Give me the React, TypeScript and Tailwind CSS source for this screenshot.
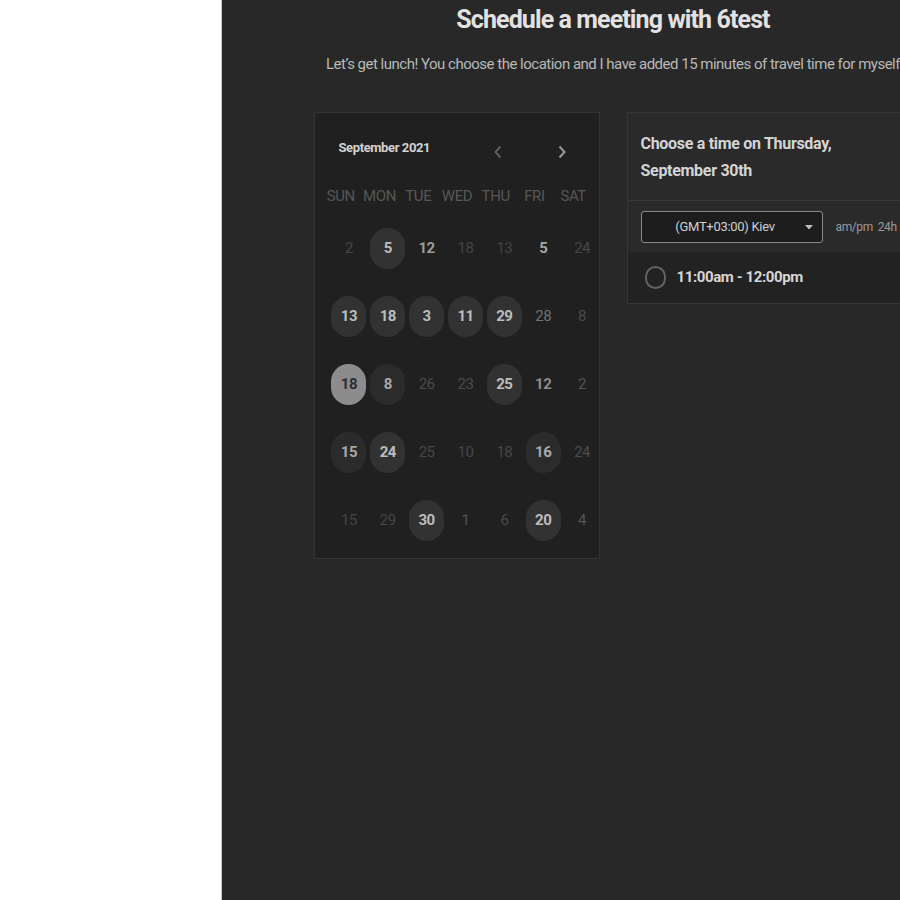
import React from "react";

type Cell = {
  n: number;
  circle?: "mid" | "dark" | "sel";
  tone?: string;
  bold?: boolean;
};

const weekdays = ["SUN", "MON", "TUE", "WED", "THU", "FRI", "SAT"];

// grid of days exactly as shown (not a real month layout)
const weeks: Cell[][] = [
  [
    { n: 2, tone: "text-[#474747]" },
    { n: 5, circle: "mid" },
    { n: 12, tone: "text-[#9a9a9a]", bold: true },
    { n: 18, tone: "text-[#444444]" },
    { n: 13, tone: "text-[#444444]" },
    { n: 5, tone: "text-[#a6a6a6]", bold: true },
    { n: 24, tone: "text-[#474747]" },
  ],
  [
    { n: 13, circle: "mid" },
    { n: 18, circle: "mid" },
    { n: 3, circle: "mid" },
    { n: 11, circle: "mid" },
    { n: 29, circle: "mid" },
    { n: 28, tone: "text-[#707070]" },
    { n: 8, tone: "text-[#4a4a4a]" },
  ],
  [
    { n: 18, circle: "sel" },
    { n: 8, circle: "dark" },
    { n: 26, tone: "text-[#4a4a4a]" },
    { n: 23, tone: "text-[#4a4a4a]" },
    { n: 25, circle: "mid" },
    { n: 12, tone: "text-[#8c8c8c]", bold: true },
    { n: 2, tone: "text-[#555555]" },
  ],
  [
    { n: 15, circle: "dark" },
    { n: 24, circle: "mid" },
    { n: 25, tone: "text-[#474747]" },
    { n: 10, tone: "text-[#474747]" },
    { n: 18, tone: "text-[#474747]" },
    { n: 16, circle: "dark" },
    { n: 24, tone: "text-[#4c4c4c]" },
  ],
  [
    { n: 15, tone: "text-[#454545]" },
    { n: 29, tone: "text-[#454545]" },
    { n: 30, circle: "mid" },
    { n: 1, tone: "text-[#555555]" },
    { n: 6, tone: "text-[#4a4a4a]" },
    { n: 20, circle: "mid" },
    { n: 4, tone: "text-[#555555]" },
  ],
];

function DayCell({ cell }: { cell: Cell }) {
  if (cell.circle) {
    const look =
      cell.circle === "sel"
        ? "bg-[#8c8c8c] text-[#2e2e2e]"
        : cell.circle === "dark"
        ? "bg-[#2b2b2b] text-[#a8a8a8]"
        : "bg-[#323232] text-[#bdbdbd]";
    return (
      <div className="flex h-[68px] items-center justify-center">
        <div
          className={`flex h-[41px] w-[35px] items-center justify-center rounded-full text-[15px] font-bold tracking-[-0.5px] ${look}`}
        >
          {cell.n}
        </div>
      </div>
    );
  }
  return (
    <div
      className={`flex h-[68px] items-center justify-center text-[15px] tracking-[-0.5px] ${
        cell.bold ? "font-bold" : "font-normal"
      } ${cell.tone}`}
    >
      {cell.n}
    </div>
  );
}

function Chevron({ dir, color }: { dir: "left" | "right"; color: string }) {
  return (
    <svg width="10" height="14" viewBox="0 0 10 14" fill="none">
      <path
        d={dir === "left" ? "M7.5 1.5 L2.5 7 L7.5 12.5" : "M2.5 1.5 L7.5 7 L2.5 12.5"}
        stroke={color}
        strokeWidth="2"
      />
    </svg>
  );
}

function CalendarCard() {
  return (
    <div className="w-[286px] border border-[#343434] bg-[#202020] pb-[4px] pt-[23px]">
      {/* Month header */}
      <div className="flex h-[24px] items-center pl-[24px]">
        <span className="w-[150px] text-[13px] font-bold tracking-[-0.4px] text-[#d2d2d2]">
          September 2021
        </span>
        <span className="mt-[8px] flex w-[18px] justify-center">
          <Chevron dir="left" color="#5e5e5e" />
        </span>
        <span className="ml-[46px] mt-[8px] flex w-[18px] justify-center">
          <Chevron dir="right" color="#9a9a9a" />
        </span>
      </div>

      {/* Weekdays */}
      <div className="ml-[7px] mt-[26px] grid w-[271px] grid-cols-7 text-center text-[15px] leading-[20px] tracking-[-0.4px] text-[#575757]">
        {weekdays.map((d) => (
          <div key={d}>{d}</div>
        ))}
      </div>

      {/* Days */}
      <div className="ml-[15px] mt-[8px] grid w-[272px] grid-cols-7">
        {weeks.map((week, wi) =>
          week.map((cell, ci) => <DayCell key={`${wi}-${ci}`} cell={cell} />)
        )}
      </div>
    </div>
  );
}

function TimesCard() {
  return (
    <div className="w-[286px] border border-[#363636] bg-[#2a2a2a]">
      <div className="border-b border-[#383838] px-[13px] pb-[16px] pt-[17px] text-[16px] font-bold leading-[27px] tracking-[-0.3px] text-[#d4d4d4]">
        Choose a time on Thursday, September 30th
      </div>

      <div className="flex items-center pb-[9px] pl-[13px] pt-[10px]">
        <div className="flex h-[32px] w-[182px] items-center rounded-[3px] border border-[#8a8a8a] bg-[#1d1d1d] pr-[9px]">
          <span className="flex-1 pl-[4px] text-center text-[13px] tracking-[-0.3px] text-[#cfcfcf]">
            (GMT+03:00) Kiev
          </span>
          <svg width="8" height="5" viewBox="0 0 8 5">
            <path d="M0 0 L8 0 L4 4.5 Z" fill="#bdbdbd" />
          </svg>
        </div>
        <span className="ml-[13px] text-[12px] tracking-[-0.4px] text-[#9a9a9a]">am/pm</span>
        <span className="ml-[5px] text-[12px] tracking-[-0.4px] text-[#9a9a9a]">24h</span>
      </div>

      <div className="flex h-[51px] items-center bg-[#222222] pl-[17px]">
        <div className="h-[23px] w-[21px] rounded-full border-2 border-[#636363]" />
        <span className="ml-[11px] text-[15px] font-bold tracking-[-0.4px] text-[#d6d6d6]">
          11:00am - 12:00pm
        </span>
      </div>
    </div>
  );
}

export default function App() {
  return (
    <div className="flex h-screen w-full overflow-hidden bg-white font-['Roboto',sans-serif]">
      <div className="w-[222px] shrink-0 border-r border-[#c8c8c8] bg-white" />
      <div className="flex w-[782px] shrink-0 flex-col items-center bg-[#282828]">
        <h1 className="mt-[5px] text-[25px] font-bold leading-[30px] tracking-[-0.9px] text-[#e2e2e2]">
          Schedule a meeting with 6test
        </h1>
        <p className="mt-[19px] whitespace-nowrap text-[15px] leading-[20px] tracking-[-0.5px] text-[#b8b8b8]">
          Let’s get lunch! You choose the location and I have added 15 minutes of travel time for myself
        </p>
        <div className="mt-[38px] flex items-start gap-[27px]">
          <CalendarCard />
          <TimesCard />
        </div>
      </div>
    </div>
  );
}
